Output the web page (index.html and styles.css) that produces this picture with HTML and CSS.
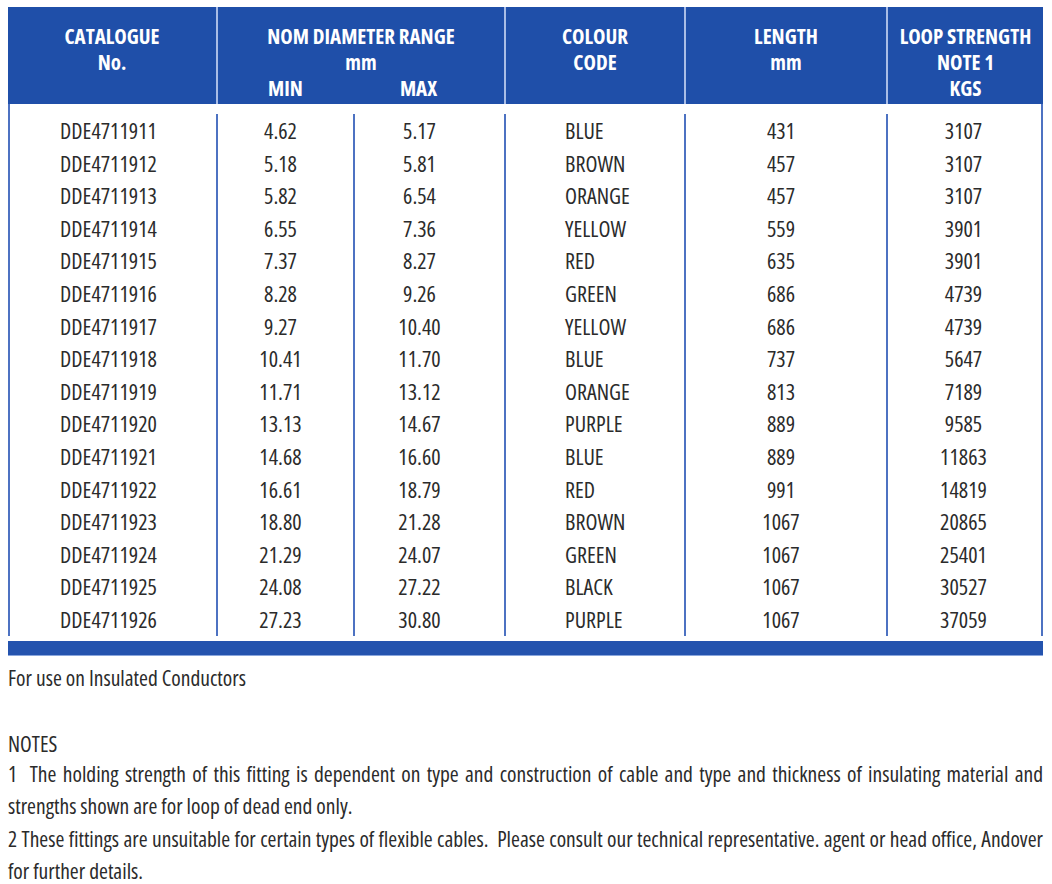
FILE: index.html
```html
<!DOCTYPE html>
<html lang="en">
<head>
<meta charset="utf-8">
<title>DDE47119 Dead Ends</title>
<link rel="stylesheet" href="styles.css">
</head>
<body>
<div class="sheet">
  <div class="head">
    <div class="hcell"><div>CATALOGUE</div><div>No.</div></div>
    <div class="hcell">
      <div>NOM DIAMETER RANGE</div>
      <div>mm</div>
      <div class="minmax"><span>MIN</span><span>MAX</span></div>
    </div>
    <div class="hcell"><div>COLOUR</div><div>CODE</div></div>
    <div class="hcell"><div>LENGTH</div><div>mm</div></div>
    <div class="hcell"><div>LOOP STRENGTH</div><div>NOTE 1</div><div>KGS</div></div>
  </div>
  <div class="body">
    <div class="grid">
      <div class="c c1">DDE4711911</div><div class="c c2">4.62</div><div class="c c3">5.17</div><div class="c c4">BLUE</div><div class="c c5">431</div><div class="c c6">3107</div>
      <div class="c c1">DDE4711912</div><div class="c c2">5.18</div><div class="c c3">5.81</div><div class="c c4">BROWN</div><div class="c c5">457</div><div class="c c6">3107</div>
      <div class="c c1">DDE4711913</div><div class="c c2">5.82</div><div class="c c3">6.54</div><div class="c c4">ORANGE</div><div class="c c5">457</div><div class="c c6">3107</div>
      <div class="c c1">DDE4711914</div><div class="c c2">6.55</div><div class="c c3">7.36</div><div class="c c4">YELLOW</div><div class="c c5">559</div><div class="c c6">3901</div>
      <div class="c c1">DDE4711915</div><div class="c c2">7.37</div><div class="c c3">8.27</div><div class="c c4">RED</div><div class="c c5">635</div><div class="c c6">3901</div>
      <div class="c c1">DDE4711916</div><div class="c c2">8.28</div><div class="c c3">9.26</div><div class="c c4">GREEN</div><div class="c c5">686</div><div class="c c6">4739</div>
      <div class="c c1">DDE4711917</div><div class="c c2">9.27</div><div class="c c3">10.40</div><div class="c c4">YELLOW</div><div class="c c5">686</div><div class="c c6">4739</div>
      <div class="c c1">DDE4711918</div><div class="c c2">10.41</div><div class="c c3">11.70</div><div class="c c4">BLUE</div><div class="c c5">737</div><div class="c c6">5647</div>
      <div class="c c1">DDE4711919</div><div class="c c2">11.71</div><div class="c c3">13.12</div><div class="c c4">ORANGE</div><div class="c c5">813</div><div class="c c6">7189</div>
      <div class="c c1">DDE4711920</div><div class="c c2">13.13</div><div class="c c3">14.67</div><div class="c c4">PURPLE</div><div class="c c5">889</div><div class="c c6">9585</div>
      <div class="c c1">DDE4711921</div><div class="c c2">14.68</div><div class="c c3">16.60</div><div class="c c4">BLUE</div><div class="c c5">889</div><div class="c c6">11863</div>
      <div class="c c1">DDE4711922</div><div class="c c2">16.61</div><div class="c c3">18.79</div><div class="c c4">RED</div><div class="c c5">991</div><div class="c c6">14819</div>
      <div class="c c1">DDE4711923</div><div class="c c2">18.80</div><div class="c c3">21.28</div><div class="c c4">BROWN</div><div class="c c5">1067</div><div class="c c6">20865</div>
      <div class="c c1">DDE4711924</div><div class="c c2">21.29</div><div class="c c3">24.07</div><div class="c c4">GREEN</div><div class="c c5">1067</div><div class="c c6">25401</div>
      <div class="c c1">DDE4711925</div><div class="c c2">24.08</div><div class="c c3">27.22</div><div class="c c4">BLACK</div><div class="c c5">1067</div><div class="c c6">30527</div>
      <div class="c c1">DDE4711926</div><div class="c c2">27.23</div><div class="c c3">30.80</div><div class="c c4">PURPLE</div><div class="c c5">1067</div><div class="c c6">37059</div>
    </div>
  </div>
  <div class="bar"></div>
  <p class="use">For use on Insulated Conductors</p>
  <p class="notes-title">NOTES</p>
  <p class="note"><span class="full">1&nbsp; The holding strength of this fitting is dependent on type and construction of cable and type and thickness of insulating material and</span>strengths shown are for loop of dead end only.</p>
  <p class="note"><span class="full">2 These fittings are unsuitable for certain types of flexible cables.&nbsp; Please consult our technical representative. agent or head office, Andover</span>for further details.</p>
</div>
</body>
</html>
```
FILE: styles.css
```css
html, body {
  margin: 0;
  padding: 0;
  background: #ffffff;
}
body {
  font-family: "Open Sans", "Roboto", "Liberation Sans", sans-serif;
  font-stretch: 75%;
  color: #2b2b2b;
}
.sheet {
  width: 1035px;
  padding: 7px 0 0 8px;
}
.head {
  display: grid;
  grid-template-columns: 208px 288px 180px 202px 157px;
  height: 97px;
  background: #1f4fa9;
  color: #ffffff;
  font-weight: bold;
  font-size: 21px;
  line-height: 26px;
}
.hcell {
  padding-top: 16px;
  text-align: center;
  border-left: 2px solid #a9bde6;
}
.hcell:first-child {
  border-left: none;
}
.minmax {
  display: grid;
  grid-template-columns: 137px 151px;
}
.minmax span:first-child { padding-right: 2px; }
.minmax span:last-child { padding-right: 24px; }
.body {
  border-left: 2px solid #4d72c2;
  border-right: 2px solid #4d72c2;
  padding-top: 10px;
}
.grid {
  display: grid;
  grid-template-columns: 206px 137px 151px 180px 202px 155px;
  grid-auto-rows: 32.6px;
  font-size: 22px;
  line-height: 32.6px;
}
.c {
  text-align: center;
  border-left: 2px solid #4d72c2;
  white-space: nowrap;
}
.c1 { border-left: none; padding-right: 9px; }
.c2 { padding-right: 10px; }
.c3 { padding-right: 20px; }
.c4 { text-align: left; padding-left: 59px; }
.c5 { padding-right: 10px; }
.c6 { padding-right: 2px; }
.bar {
  height: 14px;
  margin-top: 5px;
  background: #2453ae;
  border-bottom: 1px solid #8aa6dc;
}
p {
  margin: 0;
  font-size: 21.5px;
}
.use {
  margin-top: 8px;
  line-height: 28px;
}
.notes-title {
  margin-top: 38px;
  line-height: 28px;
}
.note {
  line-height: 22px;
  margin-top: 10.5px;
}
.notes-title + .note {
  margin-top: 5px;
}
.full {
  display: block;
  margin-bottom: 10.5px;
  text-align: justify;
  text-align-last: justify;
  white-space: nowrap;
}
```
